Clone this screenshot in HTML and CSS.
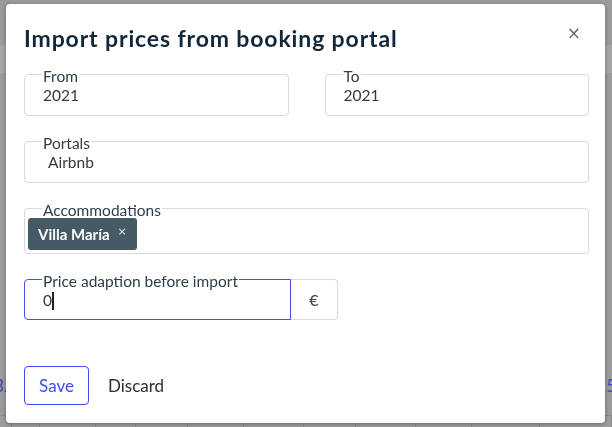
FILE: index.html
```html
<!DOCTYPE html>
<html lang="en">
<head>
<meta charset="utf-8">
<title>Import prices</title>
<link rel="stylesheet" href="styles.css">
</head>
<body>
<div class="page">
  <div class="page-top"></div>
  <div class="page-band"></div>
  <div class="page-body">
    <div class="page-nums"><span>3.</span><span>5</span></div>
  </div>
  <div class="page-grid">
    <span></span><span></span><span></span><span></span><span></span><span></span><span></span><span></span><span></span><span></span><span></span><span></span>
  </div>
</div>

<div class="modal" role="dialog">
  <header class="modal-head">
    <h1 class="modal-title">Import prices from booking portal</h1>
    <button class="close" aria-label="Close">×</button>
  </header>

  <div class="row two">
    <fieldset class="field">
      <legend>From</legend>
      <div class="value">2021</div>
    </fieldset>
    <fieldset class="field">
      <legend>To</legend>
      <div class="value">2021</div>
    </fieldset>
  </div>

  <div class="row">
    <fieldset class="field">
      <legend>Portals</legend>
      <div class="value select">Airbnb</div>
    </fieldset>
  </div>

  <div class="row">
    <fieldset class="field chips">
      <legend>Accommodations</legend>
      <div class="chip-list">
        <span class="chip">Villa María <span class="chip-x">×</span></span>
      </div>
    </fieldset>
  </div>

  <div class="row price">
    <fieldset class="field focused">
      <legend>Price adaption before import</legend>
      <div class="value">0<span class="caret"></span></div>
    </fieldset>
    <div class="addon">€</div>
  </div>

  <div class="actions">
    <button class="btn btn-primary">Save</button>
    <button class="btn btn-link">Discard</button>
  </div>
</div>
</body>
</html>
```

FILE: styles.css
```css
* { box-sizing: border-box; }

html, body {
  margin: 0;
  height: 100%;
}

body {
  font-family: "Lato", "Liberation Sans", sans-serif;
  background: #9b9b9b;
  overflow: hidden;
}

.page {
  display: flex;
  flex-direction: column;
  height: 427px;
}

.page-top { height: 45px; background: #9b9b9b; }
.page-band { height: 28px; background: #a6a6a6; }
.page-body {
  flex: 1;
  background: #9c9c9c;
  display: flex;
  flex-direction: column;
  justify-content: flex-end;
  padding-bottom: 19px;
}
.page-nums {
  display: flex;
  justify-content: space-between;
  color: #3c48b8;
  font-size: 17px;
  margin: 0 -4px 0 -6px;
}
.page-grid {
  height: 12px;
  display: grid;
  grid-template-columns: 12px 28px 56px 40px 52px 56px 60px 52px 60px 56px 68px 72px;
  border-top: 1px solid #8c8c8c;
  background: #9d9d9d;
}
.page-grid span { border-right: 1px solid #8a8a8a; }

.modal {
  position: fixed;
  top: 4px;
  left: 6px;
  width: 599px;
  height: 419px;
  background: #fff;
  border-radius: 4px;
  box-shadow: 0 1px 4px rgba(0, 0, 0, 0.35);
  padding: 20px 16px 0 18px;
  color: #2e3d47;
}

.modal-head {
  display: flex;
  justify-content: space-between;
  align-items: flex-start;
  height: 40px;
}

.modal-title {
  margin: 0;
  font-size: 23px;
  line-height: 28px;
  font-weight: 700;
  color: #12283a;
  letter-spacing: 0.87px;
}

.close {
  border: 0;
  background: none;
  padding: 0;
  margin: -1px 8px 0 0;
  font-family: "DejaVu Sans", sans-serif;
  font-size: 17px;
  line-height: 20px;
  color: #6b6b6b;
}

.row {
  display: flex;
  margin-bottom: 15px;
}
.row.two { gap: 36px; }
.row .field { flex: 1; }

.field {
  margin: 0;
  min-width: 0;
  border: 1px solid #d6d9dd;
  border-radius: 4px;
  padding: 0 18px 0;
  height: 52px;
}

.field legend {
  font-size: 15.5px;
  line-height: 16px;
  padding: 4px 1px 0;
  margin-left: -1px;
  color: #2d3e48;
}

.value {
  font-size: 15.5px;
  line-height: 20px;
  color: #333a40;
  margin-top: 1px;
}
.value.select { padding-left: 5px; }

.field.chips {
  height: 56px;
  padding-left: 3px;
}
.field.chips legend { margin-left: 14px; }
.chip-list { display: flex; }
.chip {
  display: inline-flex;
  align-items: flex-start;
  background: #455a64;
  color: #fff;
  font-weight: 700;
  font-size: 15px;
  height: 32px;
  padding: 7px 10px 0 10px;
  border-radius: 3px;
}
.chip-x {
  font-family: "DejaVu Sans", sans-serif;
  font-weight: 400;
  font-size: 11px;
  line-height: 11px;
  margin: 1px 0 0 8px;
  color: #e3e8ea;
}

.price { width: 314px; margin-bottom: 0; }
.price .field {
  border-radius: 4px 0 0 4px;
  border-color: #3f4ff0;
  height: 51px;
}
.caret {
  display: inline-block;
  width: 1.5px;
  height: 18px;
  background: #222;
  vertical-align: -4px;
}
.addon {
  width: 47px;
  height: 41px;
  margin-top: 10px;
  border: 1px solid #d6d9dd;
  border-left: 0;
  border-radius: 0 4px 4px 0;
  display: flex;
  align-items: center;
  justify-content: center;
  font-size: 16px;
  color: #444;
}

.actions {
  display: flex;
  align-items: center;
  gap: 19px;
  margin-top: 46px;
}
.btn {
  font-family: inherit;
  font-size: 17px;
  background: none;
  cursor: pointer;
}
.btn-primary {
  height: 39px;
  width: 65px;
  border: 1px solid #3d4cf0;
  border-radius: 4px;
  color: #3d4cf0;
  padding: 0;
}
.btn-link {
  border: 0;
  padding: 0;
  color: #2b2f33;
}
```
